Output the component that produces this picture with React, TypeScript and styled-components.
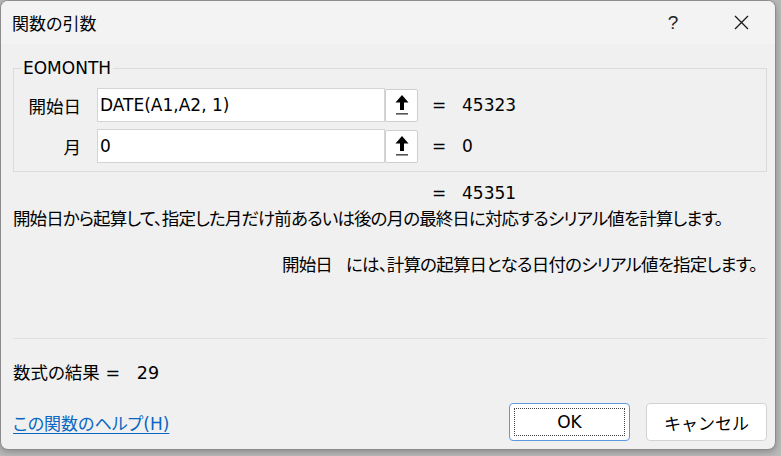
import styled, { createGlobalStyle } from "styled-components";

const GlobalStyle = createGlobalStyle`
  html, body {
    margin: 0;
    padding: 0;
    background: #b9b9b9;
  }
  body {
    width: 781px;
    height: 456px;
    overflow: hidden;
    font-family: "DejaVu Sans", "Noto Sans CJK JP", sans-serif;
    font-feature-settings: "palt" 1;
    color: #000;
  }
`;

const Dialog = styled.div`
  width: 776px;
  height: 450px;
  background: #f0f0f0;
  border: 1px solid #8c8c8c;
  border-radius: 8px;
  box-sizing: border-box;
  overflow: hidden;
  display: flex;
  flex-direction: column;
  box-shadow: 0 2px 6px rgba(0, 0, 0, 0.25);
`;

const TitleBar = styled.div`
  height: 43px;
  flex: none;
  background: #f3f3f3;
  display: flex;
  align-items: center;
  padding-left: 11px;
`;

const Title = styled.span`
  font-size: 17px;
  font-family: "Noto Sans CJK JP", sans-serif;
  flex: 1;
`;

const TitleButton = styled.span`
  width: 68px;
  height: 43px;
  display: flex;
  align-items: center;
  justify-content: center;
  font-family: "Liberation Sans", sans-serif;
  font-size: 19px;
  color: #222;
`;

const Body = styled.div`
  flex: 1;
  display: flex;
  flex-direction: column;
  padding: 0 8px 0 12px;
`;

const Group = styled.fieldset`
  margin: 14px 0 0 0;
  padding: 10px 0 8px 0;
  border: 1px solid #dcdcdc;
  min-width: 0;
  display: flex;
  flex-direction: column;
  gap: 7px;
`;

const Legend = styled.legend`
  margin-left: 7px;
  padding: 0 2px;
  font-size: 17px;
  line-height: 20px;
`;

const ArgRow = styled.div`
  display: flex;
  align-items: center;
  height: 34px;
`;

const ArgLabel = styled.span`
  width: 67px;
  text-align: right;
  font-size: 17.5px;
  margin-right: 16px;
`;

const ArgInput = styled.input`
  width: 288px;
  height: 34px;
  box-sizing: border-box;
  border: 1px solid #d4d4d4;
  background: #fff;
  padding: 0 0 0 2px;
  margin: 0;
  font-family: "DejaVu Sans", "Noto Sans CJK JP", sans-serif;
  font-size: 17px;
  color: #000;
  outline: none;
`;

const RefButton = styled.span`
  width: 33px;
  height: 33px;
  box-sizing: border-box;
  border: 1px solid #cfcfcf;
  border-radius: 2px;
  background: #fff;
  display: flex;
  align-items: center;
  justify-content: center;
`;

const Eq = styled.span<{ $flush?: boolean }>`
  font-size: 17px;
  margin-left: ${(p) => (p.$flush ? 0 : 14)}px;
  width: 30px;
`;

const Value = styled.span`
  font-size: 17px;
`;

const ResultRow = styled.div`
  display: flex;
  align-items: center;
  height: 24px;
  margin-top: 9px;
  padding-left: 419px;
`;

const Description = styled.p`
  margin: 2px 0 0 0;
  font-size: 17.5px;
  line-height: 24px;
  letter-spacing: -0.9px;
  white-space: nowrap;
`;

const ArgHelp = styled.p`
  margin: 22px 0 0 0;
  font-size: 17.5px;
  line-height: 24px;
  letter-spacing: -0.8px;
  text-align: right;
  padding-right: 10px;
  white-space: nowrap;
`;

const ArgName = styled.span`
  margin-right: 14px;
`;

const Separator = styled.hr`
  margin: 61px 0 0 0;
  border: none;
  border-top: 1px solid #e0e0e0;
`;

const FormulaResult = styled.div`
  margin-top: 22px;
  font-size: 17.5px;
  line-height: 24px;
  white-space: pre;
`;

const Footer = styled.div`
  margin-top: 18px;
  display: flex;
  align-items: center;
`;

const HelpLink = styled.a`
  font-size: 17px;
  color: #0a66c2;
  text-decoration: underline;
  text-underline-offset: 3px;
  flex: 1;
  cursor: pointer;
`;

const Button = styled.button<{ $primary?: boolean }>`
  width: 121px;
  height: 38px;
  margin-left: 16px;
  box-sizing: border-box;
  background: #fff;
  border: 1px solid ${(p) => (p.$primary ? "#5a9be0" : "#d3d3d3")};
  border-radius: 4px;
  padding: 4px;
  font-family: "DejaVu Sans", "Noto Sans CJK JP", sans-serif;
  font-size: 17px;
  color: #000;
  display: flex;
  align-items: stretch;
`;

const ButtonInner = styled.span<{ $focus?: boolean }>`
  flex: 1;
  display: flex;
  align-items: center;
  justify-content: center;
  border: 1px dotted ${(p) => (p.$focus ? "#444" : "transparent")};
`;

const RefIcon = () => (
  <svg width="20" height="22" viewBox="0 0 20 22">
    <path d="M10 1 L16.5 8.5 H12 V16 H8 V8.5 H3.5 Z" fill="#000" />
    <rect x="4" y="19" width="12" height="1.6" fill="#555" />
  </svg>
);

const CloseIcon = () => (
  <svg width="15" height="15" viewBox="0 0 15 15">
    <path d="M1 1 L14 14 M14 1 L1 14" stroke="#1a1a1a" strokeWidth="1.3" />
  </svg>
);

const args = [
  { label: "開始日", value: "DATE(A1,A2, 1)", result: "45323" },
  { label: "月", value: "0", result: "0" },
];

export default function App() {
  return (
    <>
      <GlobalStyle />
      <Dialog>
        <TitleBar>
          <Title>関数の引数</Title>
          <TitleButton>?</TitleButton>
          <TitleButton>
            <CloseIcon />
          </TitleButton>
        </TitleBar>
        <Body>
          <Group>
            <Legend>EOMONTH</Legend>
            {args.map((a) => (
              <ArgRow key={a.label}>
                <ArgLabel>{a.label}</ArgLabel>
                <ArgInput readOnly value={a.value} />
                <RefButton>
                  <RefIcon />
                </RefButton>
                <Eq>=</Eq>
                <Value>{a.result}</Value>
              </ArgRow>
            ))}
          </Group>
          <ResultRow>
            <Eq $flush>=</Eq>
            <Value>45351</Value>
          </ResultRow>
          <Description>
            開始日から起算して、指定した月だけ前あるいは後の月の最終日に対応するシリアル値を計算します。
          </Description>
          <ArgHelp>
            <ArgName>開始日</ArgName>には、計算の起算日となる日付のシリアル値を指定します。
          </ArgHelp>
          <Separator />
          <FormulaResult>{"数式の結果 =   29"}</FormulaResult>
          <Footer>
            <HelpLink>この関数のヘルプ(H)</HelpLink>
            <Button $primary>
              <ButtonInner $focus>OK</ButtonInner>
            </Button>
            <Button>
              <ButtonInner>キャンセル</ButtonInner>
            </Button>
          </Footer>
        </Body>
      </Dialog>
    </>
  );
}
